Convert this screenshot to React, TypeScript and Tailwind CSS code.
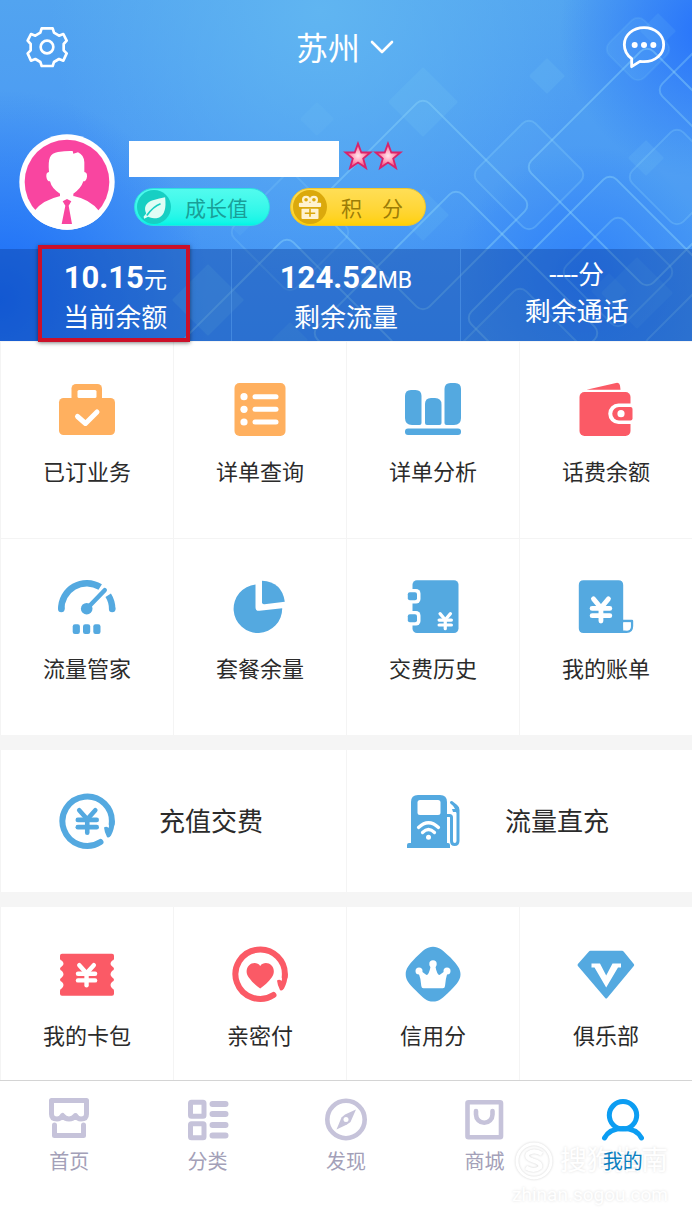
import type { ReactNode } from "react";

const BLUE = "#54a9e0";
const RED = "#fb5a66";
const ORANGE = "#ffb05f";

type IconProps = { children: ReactNode; box?: string; className?: string };

function Svg({ children, box = "0 0 60 60", className = "size-[60px]" }: IconProps) {
  return (
    <svg viewBox={box} className={className} fill="none" aria-hidden="true">
      {children}
    </svg>
  );
}

type YenProps = { x: number; y: number; w: number; h: number; sw: number; color?: string };

function Yen({ x, y, w, h, sw, color = "#fff" }: YenProps) {
  const cx = x + w / 2;
  const s = sw / 2;
  const join = y + h * 0.42;
  return (
    <g stroke={color} strokeWidth={sw} strokeLinecap="round">
      <line x1={x + s + w * 0.06} y1={y + s} x2={cx} y2={join} />
      <line x1={x + w - s - w * 0.06} y1={y + s} x2={cx} y2={join} />
      <line x1={cx} y1={join} x2={cx} y2={y + h - s} />
      <line x1={x + s} y1={y + h * 0.44} x2={x + w - s} y2={y + h * 0.44} />
      <line x1={x + s} y1={y + h * 0.71} x2={x + w - s} y2={y + h * 0.71} />
    </g>
  );
}

function BriefcaseIcon() {
  return (
    <Svg>
      <rect x="14.500" y="4" width="30.500" height="30" rx="4.500" fill={ORANGE} />
      <rect x="2" y="18" width="56" height="37" rx="4.500" fill={ORANGE} />
      <rect x="20.500" y="10" width="19" height="8" rx="1.500" fill="#fff" />
      <path d="M20.500 36.500 28.500 43.500 40 32" stroke="#fff" strokeWidth="5" strokeLinecap="round" strokeLinejoin="round" />
    </Svg>
  );
}

function ListIcon() {
  return (
    <Svg>
      <rect x="4.500" y="3" width="51" height="53" rx="5" fill={ORANGE} />
      {[16.7, 29.3, 42].map((y) => (
        <g key={y}>
          <circle cx="14" cy={y} r="3.600" fill="#fff" />
          <path d={`M25 ${y}H46`} stroke="#fff" strokeWidth="5" strokeLinecap="round" />
        </g>
      ))}
    </Svg>
  );
}

function BarsIcon() {
  return (
    <Svg>
      <g fill={BLUE}>
        <path d="M8 10h4.500q6 0 6 6V43q0 2-2 2H9q-7 0-7-7V16q0-6 6-6Z" />
        <path d="M28 18h4q6.500 0 6.500 6.500V43q0 2-2 2H24q-2 0-2-2V24q0-6 6-6Z" />
        <path d="M47.500 3h4.500q6 0 6 6v29q0 7-7 7h-7.500q-2 0-2-2V9q0-6 6-6Z" />
        <rect x="2" y="48.500" width="56" height="6.500" rx="3" />
      </g>
    </Svg>
  );
}

function WalletIcon() {
  return (
    <Svg>
      <path d="M10.500 9.700 40 3q3.500-.8 4 2.500l.5 4.200Z" fill={RED} />
      <rect x="3.500" y="12" width="51" height="44" rx="5" fill={RED} />
      <path d="M60 23.500H42.500a10 10 0 0 0 0 20.500H60Z" fill="#fff" />
      <path d="M54.500 27H43a6.700 6.700 0 0 0 0 13.500h11.500q2 0 2-2V29q0-2-2-2Z" fill={RED} />
      <circle cx="45" cy="33.700" r="3.600" fill="#fff" />
    </Svg>
  );
}

function GaugeIcon() {
  return (
    <Svg>
      <path d="M4.300 32.500A25.500 25.500 0 0 1 43.200 10" stroke={BLUE} strokeWidth="6.500" />
      <path d="M51.200 18.200A25.500 25.500 0 0 1 55.200 32.500" stroke={BLUE} strokeWidth="6.500" />
      <circle cx="4.300" cy="32" r="3.250" fill={BLUE} />
      <circle cx="55.200" cy="32" r="3.250" fill={BLUE} />
      <path d="M30 31.500 47.700 13.200" stroke={BLUE} strokeWidth="4.500" strokeLinecap="round" />
      <circle cx="29.700" cy="31.700" r="5.800" fill={BLUE} />
      <g fill={BLUE}>
        <rect x="15.700" y="47.300" width="7.200" height="9.700" rx="2.200" />
        <rect x="26" y="47.300" width="7.200" height="9.700" rx="2.200" />
        <rect x="36.300" y="47.300" width="7.200" height="9.700" rx="2.200" />
      </g>
    </Svg>
  );
}

function PieIcon() {
  return (
    <Svg>
      <path d="M25.500 7.500v22.700q0 4 4 3.600l22.700-2.500A24.300 24.300 0 1 1 25.500 7.500Z" fill={BLUE} />
      <path d="M32 3.800Q52 5 54.800 24.700L34.500 27.200q-2.500.3-2.500-2Z" fill={BLUE} />
    </Svg>
  );
}

function NotebookIcon() {
  return (
    <Svg>
      <rect x="9.500" y="3.300" width="46" height="52.700" rx="4.500" fill={BLUE} />
      {[19.300, 41.300].map((y) => (
        <g key={y}>
          <rect x="3" y={y - 7.300} width="14.500" height="14.600" rx="4.500" fill="#fff" />
          <rect x="4.800" y={y - 4} width="9.200" height="8" rx="2" fill={BLUE} />
        </g>
      ))}
      <Yen x={34.500} y={35} w={15.500} h={18.300} sw={3.200} />
    </Svg>
  );
}

function BillIcon() {
  return (
    <Svg>
      <path d="M7.500 3.300h35q4.700 0 4.700 4.700V56H7.500q-4.700 0-4.700-4.700V8q0-4.700 4.700-4.700Z" fill={BLUE} />
      <path d="M42 54.800h8.500Q56 54.800 56 49v-5H46.500" stroke={BLUE} strokeWidth="2.400" strokeLinejoin="round" />
      <path d="M47.500 45.500h7.200v4q0 4-3.600 4t-3.600-4Z" fill="#fff" />
      <Yen x={13.700} y={19.500} w={22.500} h={27} sw={4.800} />
    </Svg>
  );
}

function Ring({ color }: { color: string }) {
  return (
    <>
      <path d="M43.500 51A24.700 24.700 0 1 1 54.700 33" stroke={color} strokeWidth="6" strokeLinecap="round" />
      <path d="M57.700 30Q57.500 38 54 44.500q-2 3-4 1.500Q47.500 41.500 47 36.500q2.500-1.500 4.500.5L54 28Z" fill={color} />
    </>
  );
}

function RechargeIcon() {
  return (
    <Svg>
      <Ring color={BLUE} />
      <Yen x={18.500} y={17} w={23.500} h={27} sw={4.600} color={BLUE} />
    </Svg>
  );
}

function HeartPayIcon() {
  return (
    <Svg>
      <Ring color={RED} />
      <path d="M30.200 22C33 18 38.500 18.500 41.300 21.200c3.300 3 3.300 8.600.4 12.300C38.500 38 34 42 30.200 44.500 26.500 42 22 38 18.800 33.500c-3-3.700-3-9.300.4-12.300C22 18.500 27.500 18 30.200 22Z" fill={RED} />
    </Svg>
  );
}

function PumpIcon() {
  return (
    <Svg>
      <path d="M8 11q0-7 7-7h22q7 0 7 7v41h1q2 0 2 2v3H4v-3q0-2 2-2h2Z" fill={BLUE} />
      <rect x="14.500" y="9" width="23" height="15" rx="2.500" fill="#fff" />
      <circle cx="25.500" cy="46.200" r="2.500" fill="#fff" />
      <path d="M19.500 41.500q6-6 12 0M15.500 36.500q10-9.500 20 0" stroke="#fff" strokeWidth="3.200" strokeLinecap="round" />
      <path d="M44 24.500h2.500q2 0 2 2V50q0 3.500 3.200 3.500T55 50V19q0-2.500-1.500-3.500L48.500 11.500" stroke={BLUE} strokeWidth="3" strokeLinecap="round" />
      <path d="M48 11 56 17v8l-3-4h-3l-1-3h3Z" fill={BLUE} />
    </Svg>
  );
}

function TicketIcon() {
  return (
    <Svg>
      <path
        d="M5 9.700H55q2 0 2 2v3q0 1.500-2 2-3 3.300 0 5.500 2 1 2 2.500t-2 2.300q-3 3.300 0 6.300 2 1 2 2.500t-2 2.200q-3 3 0 6.200 2 .8 2 2.500v3q0 2-2 2H5q-2 0-2-2v-3q0-1.700 2-2.500 3-3.200 0-6.200-2-.7-2-2.200t2-2.500q3-3 0-6.300-2-.8-2-2.300t2-2.500q3-2.200 0-5.500-2-.5-2-2v-3q0-2 2-2Z"
        fill={RED}
      />
      <Yen x={18.800} y={19} w={21.500} h={24.500} sw={4.400} />
    </Svg>
  );
}

function CrownIcon() {
  return (
    <Svg>
      <path d="M30 2.700c6 0 9.500 3.300 17.500 10.800C54.500 21 57.500 25 57.500 30.200S54.500 39.500 47.500 46.500C39.500 54.500 36 57.600 30 57.600S20.500 54.500 12.800 46.500C5.500 39.500 2.700 35.500 2.700 30.200S5.500 21 12.800 13.500C20.500 6 24 2.700 30 2.700Z" fill={BLUE} />
      <g fill="#fff">
        <circle cx="16" cy="27" r="3.500" />
        <circle cx="30" cy="20" r="3.700" />
        <circle cx="44" cy="27" r="3.500" />
        <path d="M15.500 28.500 18 27l5.500 4q2.500 0 4.300-9.500h4.400q1.800 9.500 4.300 9.500L42 27l2.500 1.500Q42.500 35 42 42q-.2 2.300-2.200 2.300H20.500q-2 0-2.200-2.300Q18 35 15.500 28.500Z" />
      </g>
    </Svg>
  );
}

function ClubIcon() {
  return (
    <Svg>
      <path d="M14.500 6.700h31.500q1 0 2 1.200L57.800 20q.8 1 0 2L31.200 54q-1 1.200-2 0L1.900 22q-.8-1 0-2L12.500 7.900q1-1.200 2-1.200Z" fill={BLUE} />
      <polygon points="15.500,19.500 24,19.500 30.200,31.500 36.500,19.500 45,19.500 45,23.500 42,23.500 30.200,43.500 18.500,23.500 15.500,23.500" fill="#fff" />
    </Svg>
  );
}

const NAV_BOX = "0 0 46 46";
const NAV_SIZE = "size-[46px]";

function HomeIcon() {
  return (
    <Svg box={NAV_BOX} className={NAV_SIZE}>
      <g stroke="currentColor" strokeWidth="5" strokeLinejoin="round">
        <path d="M5.500 4.500H40.500V18q0 5-5.500 5-3.500 0-5.500-3.500-2.500 3.500-6.500 3.500T16.500 19.500Q14.500 23 11 23 5.500 23 5.500 18Z" />
        <path d="M8.500 29V39.500H37.500V29" strokeLinecap="round" />
      </g>
    </Svg>
  );
}

function CategoryIcon() {
  return (
    <Svg box={NAV_BOX} className={NAV_SIZE}>
      <g stroke="currentColor" strokeWidth="5" strokeLinecap="round">
        <rect x="5.500" y="6.300" width="13.500" height="14" rx="1" />
        <rect x="5.500" y="27.700" width="13.500" height="14" rx="1" />
        <path d="M27.500 8H40.500M27.500 18H40.500M27.500 29H40.500M27.500 39.500H40.500" strokeWidth="6" />
      </g>
    </Svg>
  );
}

function CompassIcon() {
  return (
    <Svg box={NAV_BOX} className={NAV_SIZE}>
      <circle cx="23" cy="23.500" r="18.700" stroke="currentColor" strokeWidth="4.600" />
      <path d="M33 13.500 27.500 26 24 28.500 13.500 33.500 18.500 21.500 22 18.500Z" fill="currentColor" />
      <circle cx="23" cy="23.500" r="2.500" fill="#fff" />
    </Svg>
  );
}

function BagIcon() {
  return (
    <Svg box={NAV_BOX} className={NAV_SIZE}>
      <g stroke="currentColor" strokeWidth="4.600" strokeLinecap="round">
        <rect x="6.500" y="6.300" width="33.500" height="35" rx="1" />
        <path d="M15 15v3.500a8.200 8.200 0 0 0 16.500 0V15" />
      </g>
    </Svg>
  );
}

function PersonIcon() {
  return (
    <Svg box={NAV_BOX} className={NAV_SIZE}>
      <g stroke="currentColor" strokeWidth="5" strokeLinecap="round">
        <circle cx="23" cy="19.300" r="13.700" />
        <path d="M4.500 42Q9.500 32.500 23 32.500T41.500 42" />
      </g>
    </Svg>
  );
}

type DiamondShape = { x: number; y: number; r: number; fill?: number; line?: number };

const DIAMONDS: DiamondShape[] = [
  { x: 423, y: 102, r: 35, fill: 0.16 },
  { x: 547, y: 76, r: 18, fill: 0.16 },
  { x: 317, y: 119, r: 17, fill: 0.1 },
  { x: 638, y: 49, r: 35, fill: 0.14, line: 0.12 },
  { x: 658, y: 31, r: 18, fill: 0.12 },
  { x: 646, y: 158, r: 18, fill: 0.14 },
  { x: 423, y: 215, r: 26, fill: 0.13 },
  { x: 208, y: 300, r: 36, fill: 0.2 },
  { x: 240, y: 222, r: 14, fill: 0.1 },
  { x: 290, y: 340, r: 18, fill: 0.16 },
  { x: 637, y: 293, r: 36, fill: 0.12 },
  { x: 609, y: 291, r: 18, fill: 0.1 },
  { x: 423, y: 205, r: 108, line: 0.4 },
  { x: 529, y: 175, r: 58, fill: 0.08, line: 0.28 },
  { x: 647, y: 167, r: 122, fill: 0.03, line: 0.42 },
  { x: 716, y: 90, r: 60, line: 0.35 },
  { x: 677, y: 177, r: 51, fill: 0.08, line: 0.25 },
  { x: 610, y: 318, r: 145, fill: 0.04, line: 0.42 },
  { x: 618, y: 272, r: 58, line: 0.3 },
  { x: 456, y: 333, r: 145, line: 0.4 },
  { x: 287, y: 346, r: 110, line: 0.42 },
  { x: 520, y: 365, r: 80, fill: 0.08, line: 0.32 },
  { x: 290, y: 232, r: 62, line: 0.2 },
  { x: 740, y: 345, r: 98, line: 0.32 },
];

function HeaderBackdrop() {
  return (
    <svg
      viewBox="0 0 692 341"
      preserveAspectRatio="xMidYMid slice"
      className="absolute inset-0 size-full"
      fill="none"
      aria-hidden="true"
    >
      <defs>
        <linearGradient id="sky" x1="0" y1="0" x2="0" y2="1">
          <stop offset="0" stopColor="#52a4f0" />
          <stop offset="0.5" stopColor="#4a99f4" />
          <stop offset="1" stopColor="#3f91f4" />
        </linearGradient>
        <radialGradient id="glow" gradientUnits="userSpaceOnUse" cx="320" cy="10" r="270">
          <stop offset="0" stopColor="#60b5f1" />
          <stop offset="1" stopColor="#60b5f1" stopOpacity="0" />
        </radialGradient>
        <radialGradient id="right" gradientUnits="userSpaceOnUse" cx="710" cy="30" r="150">
          <stop offset="0" stopColor="#2672fb" />
          <stop offset="1" stopColor="#2672fb" stopOpacity="0" />
        </radialGradient>
        <radialGradient id="left" gradientUnits="userSpaceOnUse" cx="0" cy="300" r="210">
          <stop offset="0" stopColor="#1a6cf8" />
          <stop offset="1" stopColor="#1a6cf8" stopOpacity="0" />
        </radialGradient>
        <radialGradient id="low" gradientUnits="userSpaceOnUse" cx="585" cy="275" r="130">
          <stop offset="0" stopColor="#2478fb" stopOpacity="0.75" />
          <stop offset="1" stopColor="#2478fb" stopOpacity="0" />
        </radialGradient>
      </defs>
      <rect width="692" height="341" fill="url(#sky)" />
      <rect width="692" height="341" fill="url(#glow)" />
      <rect width="692" height="341" fill="url(#right)" />
      <rect width="692" height="341" fill="url(#left)" />
      <rect width="692" height="341" fill="url(#low)" />
      {DIAMONDS.map((d, i) => {
        const side = d.r * Math.SQRT2;
        return (
          <rect
            key={i}
            x={d.x - side / 2}
            y={d.y - side / 2}
            width={side}
            height={side}
            rx={d.line ? 9 : 1}
            transform={`rotate(45 ${d.x} ${d.y})`}
            fill="#7fd0f5"
            fillOpacity={d.fill ?? 0}
            stroke="#8fd6fa"
            strokeOpacity={d.line ?? 0}
            strokeWidth="2"
          />
        );
      })}
    </svg>
  );
}

function Avatar() {
  return (
    <svg viewBox="58 402 288 288" className="size-24 shrink-0" role="img" aria-label="头像">
      <defs>
        <clipPath id="face">
          <circle cx="202" cy="546" r="143" />
        </clipPath>
      </defs>
      <circle cx="202" cy="546" r="143" fill="#fff" />
      <circle cx="202" cy="546" r="127" fill="#f945a0" />
      <g clipPath="url(#face)">
        <path
          d="M148 516Q145 486 151 472q6-13 24-16 24-4 44-3l2 8 14-4q18 8 19 30v29q9 1 8 14-2 14-11 14-7 22-30 37v10l-20 12-20-12v-10q-25-15-30-37-9 0-11-14-1-13 8-14Z"
          fill="#fff"
        />
        <path d="M60 700 103 634Q128 600 182 588l20 12 20-12q50 10 77 46l46 66Z" fill="#fff" />
      </g>
      <path d="M189 604 202 597 215 604 207 617 217 672H186L197 617Z" fill="#f945a0" />
    </svg>
  );
}

function Star() {
  return (
    <svg viewBox="0 0 30 30" className="size-[30px]" aria-hidden="true">
      <defs>
        <radialGradient id="starFill" cx="0.5" cy="0.5" r="0.5">
          <stop offset="0" stopColor="#ffe6ec" />
          <stop offset="0.5" stopColor="#ff9db8" />
          <stop offset="1" stopColor="#f0457c" />
        </radialGradient>
      </defs>
      <polygon
        points="15,2.500 18.300,11.500 27.500,11.500 20.200,17.500 23,27 15,21.500 7,27 9.800,17.500 2.500,11.500 11.700,11.500"
        fill="url(#starFill)"
        stroke="#d8236b"
        strokeWidth="1.800"
      />
    </svg>
  );
}

function LeafBadge() {
  return (
    <svg viewBox="408 568 104 104" className="size-[34px]" aria-hidden="true">
      <circle cx="460" cy="620" r="52" fill="#17cfc3" />
      <path d="M494 590Q500 640 476 652q-20 6-34-2l-12 6-2-6 8-10q-12-28 18-40 24-8 40-10Z" fill="#dffdf5" />
      <path d="M438 646Q458 618 480 610" stroke="#17cfc3" strokeWidth="5" fill="none" />
    </svg>
  );
}

function GiftBadge() {
  return (
    <svg viewBox="876 568 104 104" className="size-[34px]" aria-hidden="true">
      <circle cx="928" cy="620" r="52" fill="#dba90c" />
      <g fill="#fff3d0">
        <rect x="894" y="607" width="68" height="13" rx="3" />
        <rect x="902" y="625" width="52" height="32" rx="3" />
      </g>
      <g fill="none" stroke="#fff3d0" strokeWidth="7">
        <circle cx="916" cy="598" r="9" />
        <circle cx="940" cy="598" r="9" />
      </g>
      <path d="M928 625V650M912 639H944" stroke="#dba90c" strokeWidth="5" />
    </svg>
  );
}

type Entry = { label: string; icon: ReactNode };

const SERVICES: Entry[] = [
  { label: "已订业务", icon: <BriefcaseIcon /> },
  { label: "详单查询", icon: <ListIcon /> },
  { label: "详单分析", icon: <BarsIcon /> },
  { label: "话费余额", icon: <WalletIcon /> },
  { label: "流量管家", icon: <GaugeIcon /> },
  { label: "套餐余量", icon: <PieIcon /> },
  { label: "交费历史", icon: <NotebookIcon /> },
  { label: "我的账单", icon: <BillIcon /> },
];

const RECHARGES: Entry[] = [
  { label: "充值交费", icon: <RechargeIcon /> },
  { label: "流量直充", icon: <PumpIcon /> },
];

const BENEFITS: Entry[] = [
  { label: "我的卡包", icon: <TicketIcon /> },
  { label: "亲密付", icon: <HeartPayIcon /> },
  { label: "信用分", icon: <CrownIcon /> },
  { label: "俱乐部", icon: <ClubIcon /> },
];

const TABS: Entry[] = [
  { label: "首页", icon: <HomeIcon /> },
  { label: "分类", icon: <CategoryIcon /> },
  { label: "发现", icon: <CompassIcon /> },
  { label: "商城", icon: <BagIcon /> },
  { label: "我的", icon: <PersonIcon /> },
];

function Tile({ entry, className }: { entry: Entry; className: string }) {
  return (
    <a href="#" className={`flex flex-col items-center border-l border-[#f4f4f4] ${className}`}>
      {entry.icon}
      <span className="mt-[17px] text-[22px] leading-8">{entry.label}</span>
    </a>
  );
}

export default function App() {
  return (
    <div className="flex min-h-screen flex-col bg-[#f5f5f5] font-['Roboto','Noto_Sans_CJK_SC',sans-serif] text-[#2b2b2b]">
      <header className="relative text-white">
        <HeaderBackdrop />
        <div className="relative">
          <div className="flex h-[94px] items-center justify-between px-[26px]">
            <button type="button" aria-label="设置">
              <svg viewBox="80 78 126 126" className="size-[42px]" fill="none" stroke="#fff" strokeWidth="8" strokeLinejoin="round">
                <path d="M127 85H160L164 98 179 107 192 102 202 122 193 132V151L202 160 192 182 179 177 164 186 160 198H127L123 186 108 177 95 182 85 160 94 151V132L85 122 95 102 108 107 123 98Z" />
                <circle cx="143" cy="141" r="19" />
              </svg>
            </button>
            <button type="button" className="flex items-center gap-2.5 text-[32px] leading-10">
              <span className="pt-1">苏州</span>
              <svg viewBox="0 0 24 14" className="h-3.5 w-6" fill="none" stroke="#fff" strokeWidth="2.600" strokeLinecap="round" strokeLinejoin="round" aria-hidden="true">
                <path d="M2 2 12 12 22 2" />
              </svg>
            </button>
            <button type="button" aria-label="消息">
              <svg viewBox="828 74 132 132" className="size-11" fill="none">
                <path d="M857 175Q835 158 835 133C835 104 861 82 894 82S953 104 953 133 928 184 894 184Q888 184 882 183L857 199Z" stroke="#fff" strokeWidth="8.500" strokeLinejoin="round" />
                <g fill="#fff">
                  <circle cx="866" cy="134" r="9" />
                  <circle cx="894" cy="134" r="9" />
                  <circle cx="922" cy="134" r="9" />
                </g>
              </svg>
            </button>
          </div>

          <div className="flex gap-3.5 pt-10 pb-[19px] pl-[19px]">
            <Avatar />
            <div className="flex flex-col pt-[7px]">
              <div className="flex gap-1">
                <div className="h-9 w-[210px] bg-white" />
                <div className="flex">
                  <Star />
                  <Star />
                </div>
              </div>
              <div className="mt-[11px] flex gap-5 pl-[5px] text-[21px] leading-8">
                <button
                  type="button"
                  className="flex h-[38px] w-[136px] items-center gap-3.5 rounded-full border border-[#2ce0e0] bg-linear-to-b from-[#52fbee] to-[#00f5e6] pl-0.5 text-[#1a9f98]"
                >
                  <LeafBadge />
                  <span className="pt-1">成长值</span>
                </button>
                <button
                  type="button"
                  className="flex h-[38px] w-[136px] items-center gap-3.5 rounded-full border border-[#f0c62c] bg-linear-to-b from-[#ffde55] to-[#ffd000] pl-0.5 text-[#9c7d08]"
                >
                  <GiftBadge />
                  <span className="flex gap-5 pt-1">
                    <span>积</span>
                    <span>分</span>
                  </span>
                </button>
              </div>
            </div>
          </div>

          <div className="grid h-[92px] grid-cols-3 bg-[#06348c]/35 text-center text-[26px]">
            <div className="relative pt-2.5">
              <div className="text-[31px] leading-[37px] font-bold">
                10.15<span className="text-[23px] font-normal">元</span>
              </div>
              <div className="leading-[38px]">当前余额</div>
              <div className="absolute -top-1 -bottom-px left-[38px] w-[152px] border-4 border-[#cb1029] shadow-[0_1px_4px_rgba(0,0,0,0.5)]" />
            </div>
            <div className="border-x border-[#5aa0ee]/50 pt-2.5">
              <div className="text-[31px] leading-[37px] font-bold">
                124.52<span className="text-[23px] font-normal">MB</span>
              </div>
              <div className="leading-[38px]">剩余流量</div>
            </div>
            <div className="pt-2 leading-[37px]">
              <div>----分</div>
              <div>剩余通话</div>
            </div>
          </div>
        </div>
      </header>

      <main>
        <section className="grid grid-cols-4 bg-white">
          {SERVICES.map((s) => (
            <Tile key={s.label} entry={s} className="h-[197px] border-t pt-[38px]" />
          ))}
        </section>

        <section className="mt-[15px] grid grid-cols-2 bg-white">
          {RECHARGES.map((r) => (
            <a key={r.label} href="#" className="flex h-[142px] items-center gap-[42px] border-l border-[#f4f4f4] pl-14 text-[26px]">
              {r.icon}
              <span className="pt-[3px]">{r.label}</span>
            </a>
          ))}
        </section>

        <section className="mt-[15px] grid grid-cols-4 bg-white">
          {BENEFITS.map((b) => (
            <Tile key={b.label} entry={b} className="h-[173px] pt-[37px]" />
          ))}
        </section>
      </main>

      <nav className="relative grid grow grid-cols-5 border-t border-[#d4d4d4] bg-white pt-[15px] pb-[53px]">
        <div className="pointer-events-none absolute top-[60px] right-6 flex flex-col items-end text-white [text-shadow:0_0_3px_rgba(0,0,0,0.13)]">
          <div className="flex items-center gap-1.5 text-[27px] leading-10">
            <svg viewBox="0 0 40 40" className="size-10 drop-shadow-[0_0_1px_rgba(0,0,0,0.18)]" fill="none" stroke="#fff" aria-hidden="true">
              <circle cx="20" cy="20" r="17" strokeWidth="3" />
              <path d="M28 13Q20 8 14 12.500q-3 4.500 5 7 9 2.500 7 7-6 5-14 0" strokeWidth="4" />
            </svg>
            搜狗指南
          </div>
          <div className="text-[19px] leading-7">zhinan.sogou.com</div>
        </div>
        {TABS.map((t) => (
          <a
            key={t.label}
            href="#"
            className="relative flex flex-col items-center text-[#c6c3da] aria-[current=page]:text-[#0c9df2]"
            aria-current={t.label === "我的" ? "page" : undefined}
          >
            {t.icon}
            <span className={`mt-1.5 text-xl leading-7 ${t.label === "我的" ? "text-[#0b7fc0]" : "text-[#a3a0b8]"}`}>{t.label}</span>
          </a>
        ))}
      </nav>
    </div>
  );
}
